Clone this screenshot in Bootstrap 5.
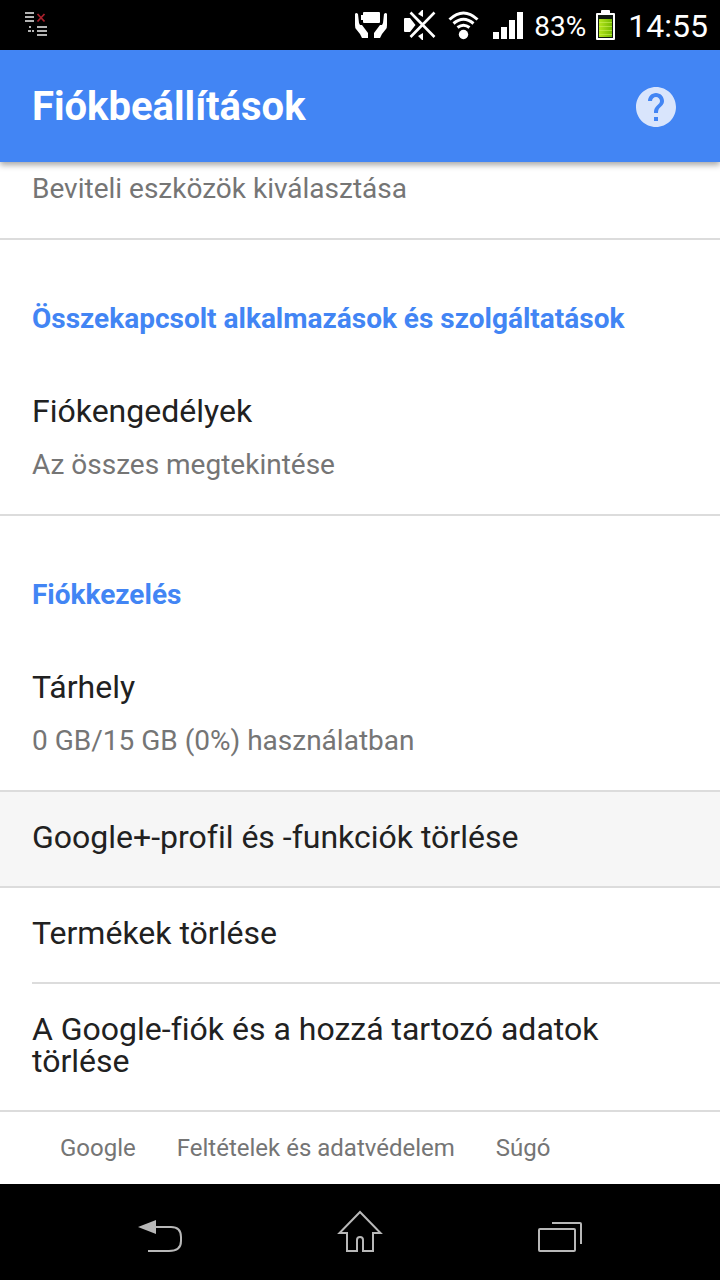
<!DOCTYPE html>
<html lang="hu">
<head>
<meta charset="utf-8">
<meta name="viewport" content="width=device-width, initial-scale=1">
<title>Fiókbeállítások</title>
<link href="https://cdn.jsdelivr.net/npm/bootstrap@5.3.0/dist/css/bootstrap.min.css" rel="stylesheet">
<style>
body{font-family:Roboto,sans-serif;font-variant-ligatures:none;color:#212121;background:#fff}
a{color:inherit;text-decoration:none}
.status-bar{padding-right:12px;padding-left:20px}
.clock{font-size:32px;line-height:48px;padding-top:2px}
.percent{font-size:28px;line-height:32px;padding-top:4px}
.app-bar{background:#4285f4;padding:33px 44px 31px 32px;box-shadow:0 3px 6px rgba(0,0,0,.35);z-index:1}
.app-title{font-size:40px;line-height:48px;font-weight:700}
.help-btn{color:#d9e5fc}
.entry{display:block;padding:29px 32px 33px;border-bottom:2px solid #dcdcdc}
.entry-cut{padding-top:11px}
.entry-pressed{background:#f6f6f6}
.entry-inset{margin-left:32px;padding-left:0}
.entry-title{font-size:32px;line-height:32px}
.entry-note{font-size:28px;line-height:32px;color:#757575}
.entry-title + .entry-note{margin-top:22px}
.section-title{font-size:28px;line-height:32px;font-weight:700;color:#4285f4;padding:63px 32px 31px;margin:0}
.page-links{padding:20px 60px;gap:8px 41px;font-size:24px;line-height:32px;color:#757575}
.nav-keys svg{display:block}
</style>
</head>
<body class="d-flex flex-column min-vh-100">
<div class="status-bar bg-black text-white d-flex align-items-center gap-2">
  <svg class="me-auto" width="32" height="50" viewBox="20 0 32 50" aria-hidden="true">
    <path fill="#b4b4b4" d="M25 12h9v2h-9zM25 16h9v2h-9zM25 20h9v2h-9zM29 26h2v2h-2zM28 30h3v2h-3zM32 30h2v2h-2zM37 26h10v2h-10zM37 30h10v2h-10zM37 34h10v2h-10z"/>
    <path stroke="#a8202c" stroke-width="1.8" d="m37.500 14 7 7.500m0-7.500-7 7.500"/>
  </svg>
  <svg width="40" height="50" viewBox="352 0 40 50" fill="#fff" aria-hidden="true">
    <path d="M364 12h15q1 0 1 1v9q0 1-1 1h-15q-1 0-1-1v-2h-2v-5h2v-2q0-1 1-1z"/>
    <path id="hand" d="M355 14q1-2 3 0l1 9 1 2 2 0 6 8v5h-6l-2-4-4-5q-1-1-1-4z"/>
    <use href="#hand" transform="matrix(-1 0 0 1 742 0)"/>
  </svg>
  <svg width="38" height="50" viewBox="400 0 38 50" fill="#fff" aria-hidden="true">
    <path d="M405 18h5l5.500 7-5.500 7h-5q-1 0-1-1V19q0-1 1-1zM418 14l4-4h1v7zM418 36l4 4h1v-7z"/>
    <path stroke="#fff" stroke-width="2.600" d="m410.500 12.500 24 24.500m0-24.500-24 24.500"/>
  </svg>
  <svg width="36" height="50" viewBox="446 0 36 50" aria-hidden="true">
    <circle cx="463.500" cy="34.500" r="4.700" fill="#fff"/>
    <path fill="none" stroke="#fff" stroke-width="3" d="M449.500 19.500q14-13 28 0M453.500 23.500q10-8.500 20 0M457.500 27.500q6-4.500 12 0"/>
  </svg>
  <svg width="36" height="50" viewBox="490 0 36 50" fill="#fff" aria-hidden="true">
    <path d="M493 32h6v7h-6zM501 27h6v12h-6zM509 20h6v19h-6zM517 12h6v27h-6z"/>
  </svg>
  <span class="percent">83%</span>
  <svg width="26" height="50" viewBox="594 0 26 50" aria-hidden="true">
    <defs><linearGradient id="charge"><stop stop-color="#b5e61d"/><stop offset="1" stop-color="#74b800"/></linearGradient></defs>
    <path fill="#fff" d="M602 10h7q1 0 1 1v2h4q1 0 1 1v25q0 1-1 1h-17q-1 0-1-1V14q0-1 1-1h4v-2q0-1 1-1z"/>
    <path fill="#101a10" d="M598 15h15v23h-15z"/>
    <path fill="url(#charge)" d="M599 19h13v18h-13z"/>
    <path stroke="#cdf05c" stroke-opacity=".6" d="M599 22.500h13M599 26.500h13M599 30.500h13M599 34.500h13"/>
  </svg>
  <span class="clock">14:55</span>
</div>

<header class="app-bar d-flex align-items-center justify-content-between text-white position-relative">
  <h1 class="app-title m-0">Fiókbeállítások</h1>
  <button type="button" class="help-btn btn p-0 border-0 lh-1" aria-label="Súgó">
    <svg class="d-block" width="40" height="40" viewBox="2 2 20 20" fill="currentColor"><path d="M12 2C6.480 2 2 6.480 2 12s4.480 10 10 10 10-4.480 10-10S17.520 2 12 2zm1 17h-2v-2h2v2zm2.070-7.750-.9.920C13.450 12.900 13 13.500 13 15h-2v-.5c0-1.100.45-2.100 1.170-2.830l1.240-1.260c.37-.36.59-.86.59-1.410 0-1.100-.9-2-2-2s-2 .9-2 2H8c0-2.210 1.790-4 4-4s4 1.790 4 4c0 .88-.36 1.680-.93 2.250z"/></svg>
  </button>
</header>

<main class="flex-grow-1">
  <a href="#" class="entry entry-cut"><div class="entry-note">Beviteli eszközök kiválasztása</div></a>

  <h2 class="section-title">Összekapcsolt alkalmazások és szolgáltatások</h2>
  <a href="#" class="entry">
    <div class="entry-title">Fiókengedélyek</div>
    <div class="entry-note">Az összes megtekintése</div>
  </a>

  <h2 class="section-title">Fiókkezelés</h2>
  <a href="#" class="entry">
    <div class="entry-title">Tárhely</div>
    <div class="entry-note">0 GB/15 GB (0%) használatban</div>
  </a>
  <a href="#" class="entry entry-pressed"><div class="entry-title">Google+-profil és -funkciók törlése</div></a>
  <a href="#" class="entry entry-inset"><div class="entry-title">Termékek törlése</div></a>
  <a href="#" class="entry"><div class="entry-title">A Google-fiók és a hozzá tartozó adatok törlése</div></a>

  <footer class="page-links d-flex flex-wrap">
    <a href="#">Google</a>
    <a href="#">Feltételek és adatvédelem</a>
    <a href="#">Súgó</a>
  </footer>
</main>

<nav class="nav-keys bg-black d-flex justify-content-evenly">
  <button type="button" class="btn p-0 border-0 rounded-0" aria-label="Vissza">
    <svg width="80" height="96" viewBox="120 1184 80 96"><path fill="#b8b8b8" d="m138 1227 18-7v14z"/><path fill="none" stroke="#b8b8b8" stroke-width="2" d="M155 1227h16q10 0 10 10v4q0 10-12 10h-21"/></svg>
  </button>
  <button type="button" class="btn p-0 border-0 rounded-0" aria-label="Kezdőképernyő">
    <svg width="80" height="96" viewBox="320 1184 80 96"><path fill="none" stroke="#b8b8b8" stroke-width="2" d="M347 1233h-7.500l20.500-21 20.500 21H373v18h-10v-11q0-3-3-3t-3 3v11h-10z"/></svg>
  </button>
  <button type="button" class="btn p-0 border-0 rounded-0" aria-label="Legutóbbi alkalmazások">
    <svg width="80" height="96" viewBox="520 1184 80 96" fill="none" stroke="#b8b8b8" stroke-width="2"><rect x="539" y="1229" width="36" height="22" rx="1"/><path d="M552 1223h28q1 0 1 1v20"/></svg>
  </button>
</nav>
<script src="https://cdn.jsdelivr.net/npm/bootstrap@5.3.0/dist/js/bootstrap.bundle.min.js"></script>
</body>
</html>
